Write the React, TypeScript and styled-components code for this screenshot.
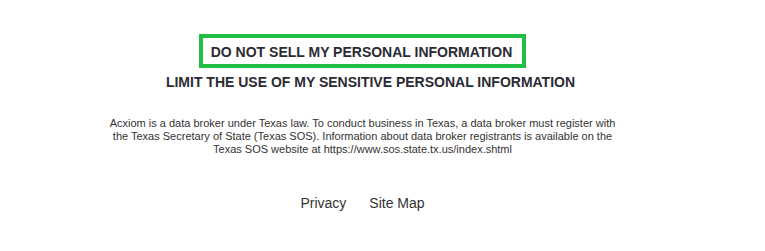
import React from 'react';
import styled, { createGlobalStyle } from 'styled-components';

const GlobalStyle = createGlobalStyle`
    body {
        margin: 0;
        background: #ffffff;
        font-family: 'Liberation Sans', Arial, sans-serif;
    }
`;

const App = () => {
    return (
        <>
            <GlobalStyle />
            <Footer>
                <PrivacyLinks>
                    <FocusLink href="#">DO NOT SELL MY PERSONAL INFORMATION</FocusLink>
                    <PrivacyLink href="#" $shift={16}>LIMIT THE USE OF MY SENSITIVE PERSONAL INFORMATION</PrivacyLink>
                </PrivacyLinks>
                <Notice>
                    Acxiom is a data broker under Texas law. To conduct business in Texas, a data broker must register with<br />
                    the Texas Secretary of State (Texas SOS). Information about data broker registrants is available on the<br />
                    Texas SOS website at https://www.sos.state.tx.us/index.shtml
                </Notice>
                <NavRow>
                    <NavLink href="#">Privacy</NavLink>
                    <NavLink href="#">Site Map</NavLink>
                </NavRow>
            </Footer>
        </>
    );
};

export default App;

const Footer = styled.footer`
    display: flex;
    flex-direction: column;
    align-items: center;
    width: 725px;
    height: 251px;
    padding-top: 34px;
    box-sizing: border-box;
`;

const PrivacyLinks = styled.div`
    display: flex;
    flex-direction: column;
    align-items: center;
    gap: 6px;
`;

const PrivacyLink = styled.a<{ $shift?: number }>`
    display: block;
    margin-left: ${(p) => p.$shift ?? 0}px;
    font-size: 14px;
    font-weight: 700;
    line-height: 16px;
    color: #2b2b33;
    text-decoration: none;
    white-space: nowrap;
`;

const FocusLink = styled(PrivacyLink)`
    padding: 6px 10px 4px 8px;
    border: 4px solid #21bf45;
`;

const Notice = styled.p`
    margin: 27px 0 0;
    font-size: 11px;
    line-height: 13px;
    color: #333333;
    text-align: center;
`;

const NavRow = styled.nav`
    display: flex;
    gap: 23px;
    margin-top: 39px;
`;

const NavLink = styled.a`
    font-size: 14px;
    line-height: 16px;
    color: #333333;
    text-decoration: none;
`;
